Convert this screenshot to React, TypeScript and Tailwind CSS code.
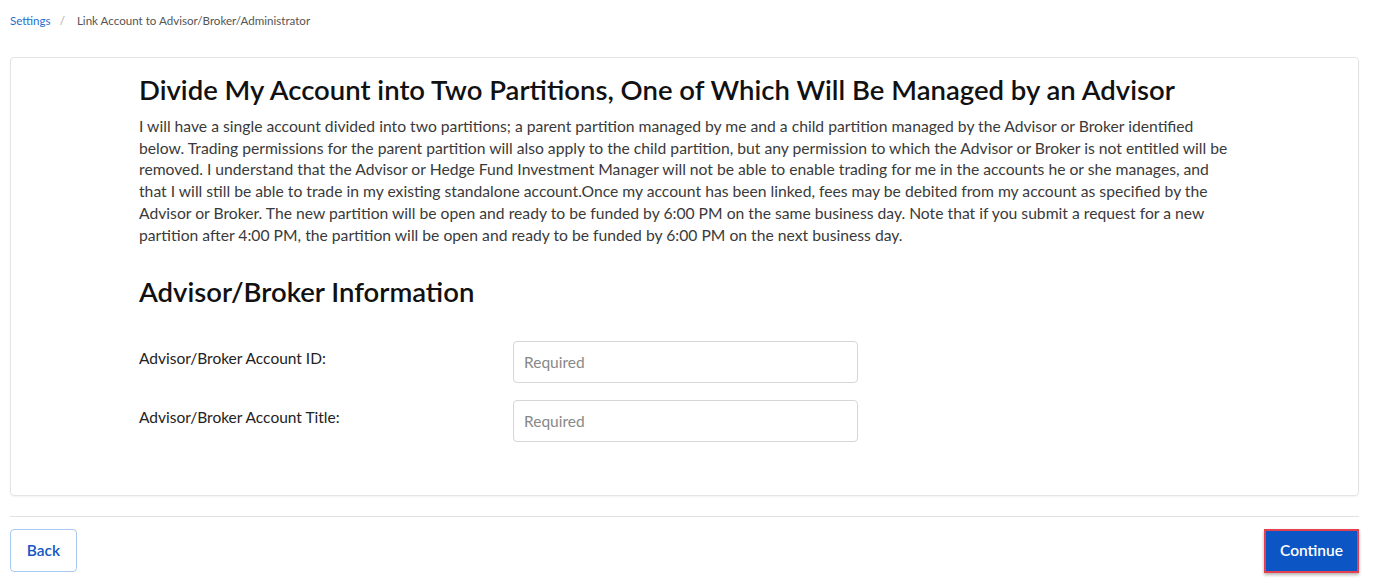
export default function App() {
  return (
    <div className="min-h-[584px] bg-white pl-[10px] pr-[15px] text-[#333]" style={{ fontFamily: '"Lato", "Liberation Sans", sans-serif' }}>
      {/* breadcrumb */}
      <div className="flex items-center h-[42px] text-[11.6px]">
        <a className="text-[#1f6fd1]">Settings</a>
        <span className="mx-[9px] text-[#aaa]">/</span>
        <span className="ml-[3px] text-[#555]">Link Account to Advisor/Broker/Administrator</span>
      </div>

      <div className="mt-[15px] rounded-[4px] border border-[#e4e4e4] shadow-[0_1px_2px_rgba(0,0,0,0.05)] h-[439px]">
        <div className="pl-[128px] pr-[120px] pt-[16px]">
          <h1 className="text-[27.5px] font-semibold leading-[32px] text-[#111]">
            Divide My Account into Two Partitions, One of Which Will Be Managed by an Advisor
          </h1>
          <p className="mt-[10px] text-[15.7px] leading-[21.7px] text-[#3a3a3a]">
            I will have a single account divided into two partitions; a parent partition managed by me and a child partition managed by the Advisor or Broker identified below. Trading permissions for the parent partition will also apply to the child partition, but any permission to which the Advisor or Broker is not entitled will be removed. I understand that the Advisor or Hedge Fund Investment Manager will not be able to enable trading for me in the accounts he or she manages, and that I will still be able to trade in my existing standalone account.Once my account has been linked, fees may be debited from my account as specified by the Advisor or Broker. The new partition will be open and ready to be funded by 6:00 PM on the same business day. Note that if you submit a request for a new partition after 4:00 PM, the partition will be open and ready to be funded by 6:00 PM on the next business day.
          </p>

          <h2 className="mt-[30px] text-[27.5px] font-semibold leading-[32px] text-[#111]">Advisor/Broker Information</h2>

          <div className="mt-[33px] flex flex-col gap-[17px]">
            <div className="flex items-center">
              <label className="w-[374px] text-[15.5px] text-[#222] -mt-[8px]">Advisor/Broker Account ID:</label>
              <input
                placeholder="Required"
                className="w-[345px] h-[42px] rounded-[4px] border border-[#d6d6d6] px-[10px] text-[15.5px] placeholder:text-[#888] outline-none"
              />
            </div>
            <div className="flex items-center">
              <label className="w-[374px] text-[15.5px] text-[#222] -mt-[8px]">Advisor/Broker Account Title:</label>
              <input
                placeholder="Required"
                className="w-[345px] h-[42px] rounded-[4px] border border-[#d6d6d6] px-[10px] text-[15.5px] placeholder:text-[#888] outline-none"
              />
            </div>
          </div>
        </div>
      </div>

      <div className="mt-[20px] border-t border-[#e2e2e2] pt-[12px] flex items-start justify-between">
        <button className="h-[43px] w-[67px] rounded-[4px] border border-[#a9c8f2] text-[15.5px] font-semibold text-[#1557c4]">
          Back
        </button>
        <button className="h-[44px] w-[95px] border-2 border-[#e5404f] bg-[#0b56c4] text-[15.5px] font-semibold text-white shadow-[0_2px_3px_rgba(0,0,0,0.3)]">
          Continue
        </button>
      </div>
    </div>
  );
}
